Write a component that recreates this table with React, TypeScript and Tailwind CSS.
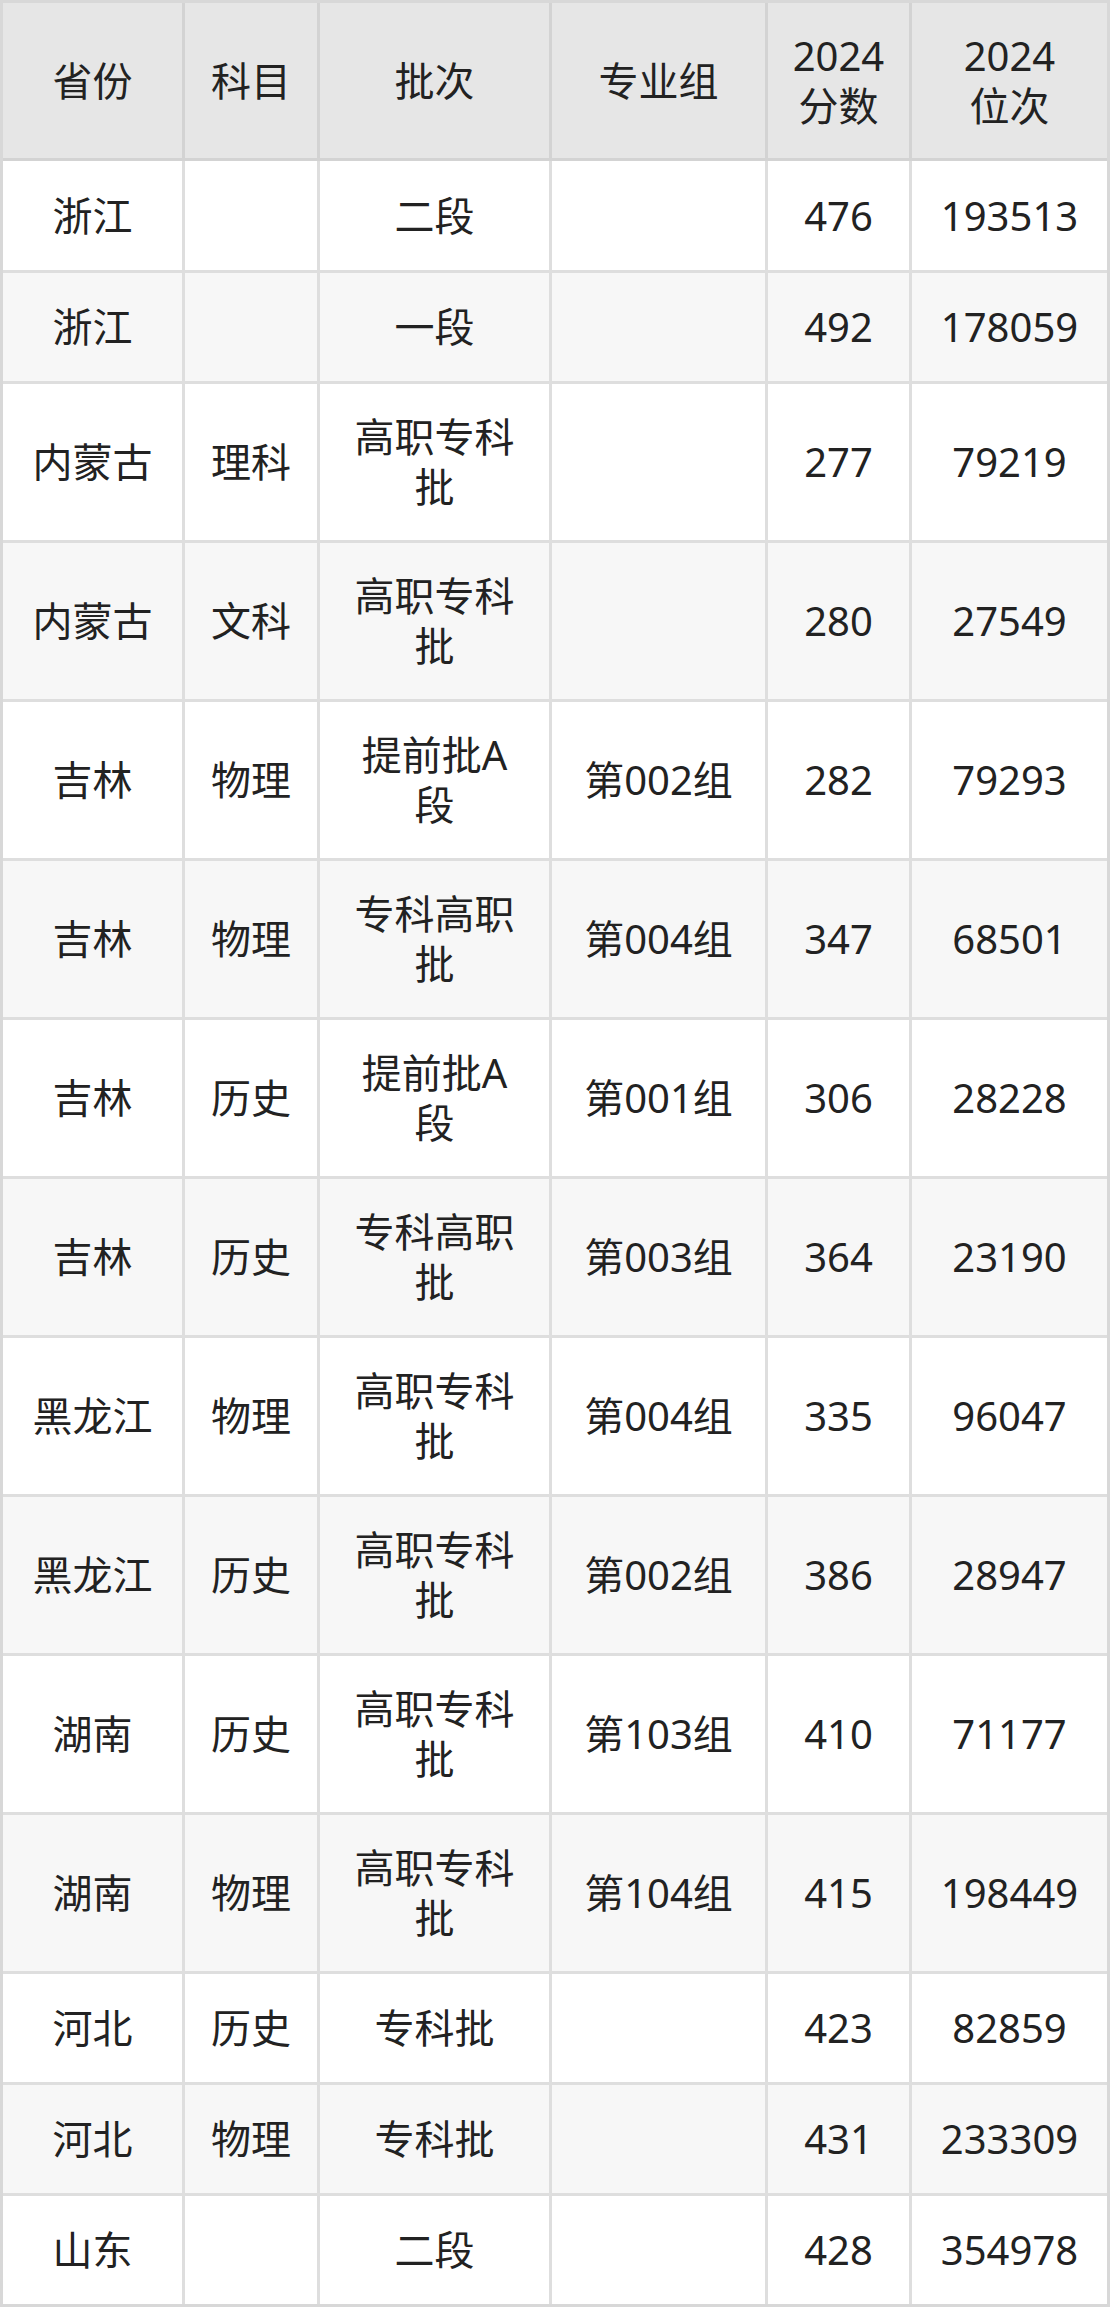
import React from "react";

type Row = { cells: string[][]; tall: boolean };

const rows: Row[] = [
  { cells: [["浙江"], [""], ["二段"], [""], ["476"], ["193513"]], tall: false },
  { cells: [["浙江"], [""], ["一段"], [""], ["492"], ["178059"]], tall: false },
  { cells: [["内蒙古"], ["理科"], ["高职专科", "批"], [""], ["277"], ["79219"]], tall: true },
  { cells: [["内蒙古"], ["文科"], ["高职专科", "批"], [""], ["280"], ["27549"]], tall: true },
  { cells: [["吉林"], ["物理"], ["提前批A", "段"], ["第002组"], ["282"], ["79293"]], tall: true },
  { cells: [["吉林"], ["物理"], ["专科高职", "批"], ["第004组"], ["347"], ["68501"]], tall: true },
  { cells: [["吉林"], ["历史"], ["提前批A", "段"], ["第001组"], ["306"], ["28228"]], tall: true },
  { cells: [["吉林"], ["历史"], ["专科高职", "批"], ["第003组"], ["364"], ["23190"]], tall: true },
  { cells: [["黑龙江"], ["物理"], ["高职专科", "批"], ["第004组"], ["335"], ["96047"]], tall: true },
  { cells: [["黑龙江"], ["历史"], ["高职专科", "批"], ["第002组"], ["386"], ["28947"]], tall: true },
  { cells: [["湖南"], ["历史"], ["高职专科", "批"], ["第103组"], ["410"], ["71177"]], tall: true },
  { cells: [["湖南"], ["物理"], ["高职专科", "批"], ["第104组"], ["415"], ["198449"]], tall: true },
  { cells: [["河北"], ["历史"], ["专科批"], [""], ["423"], ["82859"]], tall: false },
  { cells: [["河北"], ["物理"], ["专科批"], [""], ["431"], ["233309"]], tall: false },
  { cells: [["山东"], [""], ["二段"], [""], ["428"], ["354978"]], tall: false },
];

const header: string[][] = [["省份"], ["科目"], ["批次"], ["专业组"], ["2024", "分数"], ["2024", "位次"]];

function Cell({ lines, last, headerCell }: { lines: string[]; last: boolean; headerCell?: boolean }) {
  return (
    <div
      className={
        "flex flex-col items-center justify-center text-center " +
        (last ? "" : headerCell ? "border-r-[3px] border-[#d3d3d3]" : "border-r-[3px] border-[#dedede]")
      }
    >
      {lines.map((l, i) => (
        <span key={i} className="block whitespace-nowrap">
          {l || "\u00a0"}
        </span>
      ))}
    </div>
  );
}

export default function App() {
  return (
    <div
      className="w-[1110px] bg-white text-[#222222] text-[40px] leading-[50px]"
      style={{ fontFamily: '"Noto Sans", "Noto Sans CJK SC", sans-serif' }}
    >
      <div className="border-[3px] border-[#d8d8d8]">
        <div className="grid grid-cols-[182px_135px_232px_216px_144px_195px] h-[158px] bg-[#e6e6e6] border-b-[3px] border-[#d3d3d3]">
          {header.map((c, i) => (
            <Cell key={i} lines={c} last={i === 5} headerCell />
          ))}
        </div>
        {rows.map((r, ri) => {
          const isLast = ri === rows.length - 1;
          const bg = ri % 2 === 1 ? "bg-[#f7f7f7]" : "bg-white";
          let h = r.tall ? "h-[159px]" : "h-[111px]";
          if (ri === 0) h = "h-[112px]";
          if (isLast) h = "h-[108px]";
          return (
            <div
              key={ri}
              className={
                "grid grid-cols-[182px_135px_232px_216px_144px_195px] " +
                h +
                " " +
                bg +
                (isLast ? "" : " border-b-[3px] border-[#dedede]")
              }
            >
              {r.cells.map((c, ci) => (
                <Cell key={ci} lines={c} last={ci === 5} />
              ))}
            </div>
          );
        })}
      </div>
    </div>
  );
}
